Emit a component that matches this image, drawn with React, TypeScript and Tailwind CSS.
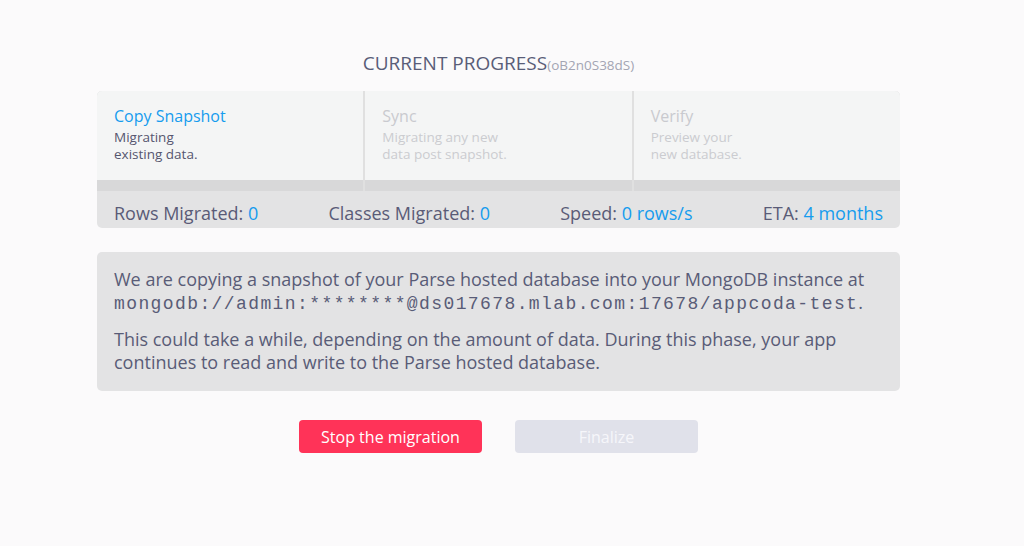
export default function App() {
  const steps = [
    { title: "Copy Snapshot", desc: ["Migrating", "existing data."], active: true },
    { title: "Sync", desc: ["Migrating any new", "data post snapshot."], active: false },
    { title: "Verify", desc: ["Preview your", "new database."], active: false },
  ]

  return (
    <div className="min-h-[546px] bg-[#fbfafb] pt-[49px] font-['Open_Sans',sans-serif]">
      <div className="w-[803px] ml-[97px]">
        {/* Title */}
        <h1 className="text-center text-[19px] leading-[28px] text-[#595d78]">
          CURRENT PROGRESS
          <span className="text-[13.5px] text-[#a3a5b3]">(oB2n0S38dS)</span>
        </h1>

        {/* Progress card */}
        <div className="mt-[12px] rounded-[5px] overflow-hidden bg-[#e3e3e4]">
          <div className="flex gap-[2px] bg-[#e0e0e0]">
            {steps.map((s) => (
              <div key={s.title} className="flex-1 flex flex-col">
                <div className="h-[89px] bg-[#f4f5f5] pl-[17px] pt-[14px]">
                  <div className={`text-[16px] leading-[22px] ${s.active ? "text-[#169cee]" : "text-[#c9cacf]"}`}>
                    {s.title}
                  </div>
                  <div
                    className={`mt-[1.5px] text-[13.5px] leading-[17px] ${s.active ? "text-[#56566f]" : "text-[#cbccd0]"}`}
                  >
                    {s.desc.map((d) => (
                      <div key={d}>{d}</div>
                    ))}
                  </div>
                </div>
                <div className="h-[11px] bg-[#d8d8d9]" />
              </div>
            ))}
          </div>
          <div className="h-[37px] pt-[7px] flex items-center justify-between px-[17px] text-[18px] text-[#5a5b77]">
            <div>
              Rows Migrated: <span className="text-[#169cee]">0</span>
            </div>
            <div>
              Classes Migrated: <span className="text-[#169cee]">0</span>
            </div>
            <div>
              Speed: <span className="text-[#169cee]">0 rows/s</span>
            </div>
            <div>
              ETA: <span className="text-[#169cee]">4 months</span>
            </div>
          </div>
        </div>

        {/* Info box */}
        <div className="mt-[24px] rounded-[5px] bg-[#e3e3e4] px-[17px] pt-[16px] pb-[17px] text-[18px] leading-[23px] text-[#595c77]">
          <p>
            We are copying a snapshot of your Parse hosted database into your MongoDB instance at{" "}
            <span className="font-['Liberation_Mono',monospace] text-[18px] tracking-[1.4px]">
              mongodb://admin:********@ds017678.mlab.com:17678/appcoda-test
            </span>
            .
          </p>
          <p className="mt-[12px]">
            This could take a while, depending on the amount of data. During this phase, your app continues to read and
            write to the Parse hosted database.
          </p>
        </div>

        {/* Buttons */}
        <div className="mt-[29px] flex justify-center gap-[33px]">
          <button className="w-[183px] h-[33px] rounded-[4px] bg-[#ff3358] text-white text-[16px]">
            Stop the migration
          </button>
          <button className="w-[183px] h-[33px] rounded-[4px] bg-[#e0e1ea] text-[#f6f6fa] text-[16px]">
            Finalize
          </button>
        </div>
      </div>
    </div>
  )
}
